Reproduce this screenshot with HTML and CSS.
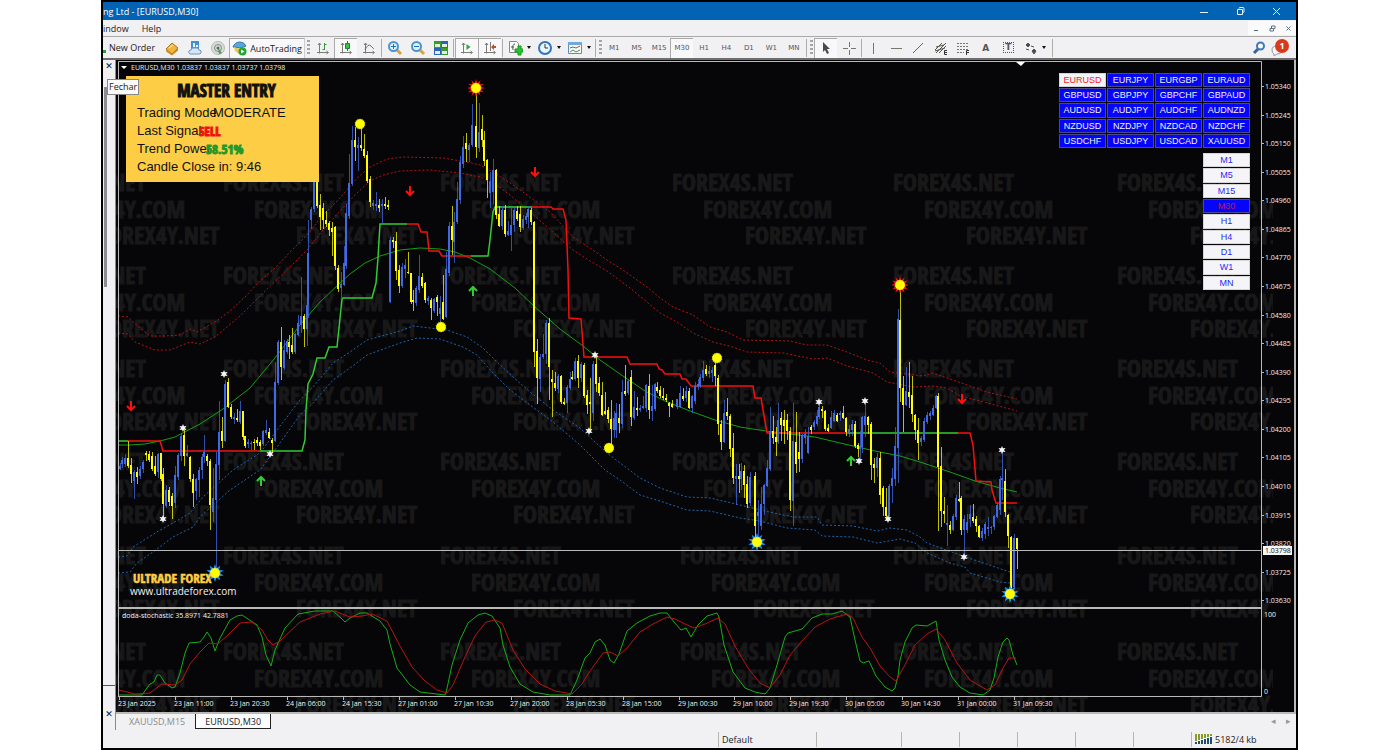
FILE: index.html
```html
<!DOCTYPE html>
<html lang="en">

<head>
    <meta charset="UTF-8" />
    <meta name="viewport" content="width=device-width, initial-scale=1.0" />
    <title>EURUSD,M30</title>
    <link rel="stylesheet" href="styles.css">
</head>

<body>
    <div class="window">
        <header class="title-bar">
            <span class="title">ng Ltd - [EURUSD,M30]</span>
            <button class="win-button" aria-label="Minimize"><svg width="9" height="9"><path d="M0 5.5h8" /></svg></button>
            <button class="win-button" aria-label="Restore"><svg width="9" height="9"><path d="M1.5 2.5h5v5h-5zM3 1.5q0-1 1-1h3q1 0 1 1v3q0 1-1 1" /></svg></button>
            <button class="win-button" aria-label="Close"><svg width="9" height="9"><path d="M1 1l7 7M8 1l-7 7" /></svg></button>
        </header>

        <nav class="menu-bar">
            <a href="#">indow</a>
            <a href="#">Help</a>
            <span class="spacer"></span>
            <button class="mdi-button" aria-label="Minimize chart"><svg width="7" height="7"><path d="M1 5.5h4" /></svg></button>
            <button class="mdi-button" aria-label="Restore chart"><svg width="7" height="7"><path d="M1 3.5h3.5V6H1zM2.500 3V1H6v2.500H5" /></svg></button>
            <button class="mdi-button" aria-label="Close chart"><svg width="7" height="7"><path d="M1.500 1.500l4 4M5.500 1.500l-4 4" /></svg></button>
        </nav>

        <div class="toolbar">
            <button class="new-order"><svg width="3" height="14"><path d="M0 9h3v3H0z" fill="#1fa32a" /></svg>New Order</button>
            <button class="tool" aria-label="Market"><svg width="16" height="16" viewBox="0 0 16 16"><path d="M2 9l6-6 6 5-6 6z" fill="#f0b63c" stroke="#a8741b" /><path d="M2 10l6 3.500 6-5v2l-6 5-6-4z" fill="#c98a24" /><path d="M5 8l4-3" stroke="#fff0b8" /></svg></button>
            <button class="tool" aria-label="VPS"><svg width="16" height="16" viewBox="0 0 16 16"><path d="M4 1h8v8H4z" fill="#3f8fd8" /><path d="M6 3h2v4H6zM9 5h2v2H9z" fill="#e9f5ff" /><path d="M3 14q-2-1-1-3 1-1 2-1 1-3 4-2 3-1 4 2 3 0 2 3-1 1-2 1z" fill="#d7e6f5" stroke="#6b96c4" /></svg></button>
            <button class="tool" aria-label="Signals"><svg width="16" height="16" viewBox="0 0 16 16"><circle cx="8" cy="8" r="6.500" fill="#d8dcd9" stroke="#b4bab6" /><circle cx="8" cy="8" r="3.500" fill="none" stroke="#818a84" /><path d="M8 8l1 6 3-1z" fill="#43a047" /><circle cx="8" cy="8" r="1.500" fill="#51705a" /></svg></button>
            <button class="auto-trading pressed"><svg width="15" height="15" viewBox="0 0 15 15"><path d="M1 6q2-5 7-5 4 0 6 4l-5 2z" fill="#5aa7dc" stroke="#2f79ad" /><path d="M2 6l6 2 5-2-2 6-4 1-4-3z" fill="#f1c74c" /><circle cx="10.500" cy="10.500" r="4" fill="#27a532" /><path d="M9 8.500v4l3.500-2z" fill="#fff" /></svg>AutoTrading</button>
            <span class="grip"></span>
            <button class="tool" aria-label="Bar chart"><svg width="16" height="16" viewBox="0 0 16 16"><path d="M4.500 3v10.500M2 12.500h11M3 5l1.500-2L6 5M11.500 11l2 1.500-2 1.500" class="axis" /><path d="M9.500 3v7M7.500 9.500h2M9.500 4.500h2" stroke="#2f9a3b" fill="none" /></svg></button>
            <button class="tool pressed" aria-label="Candlesticks"><svg width="16" height="16" viewBox="0 0 16 16"><path d="M4.500 3v10.500M2 12.500h11M3 5l1.500-2L6 5M11.500 11l2 1.500-2 1.500" class="axis" /><path d="M9.500 1v10" stroke="#198a26" /><path d="M7.500 3.500h4v5h-4z" fill="#31c441" stroke="#198a26" /></svg></button>
            <button class="tool" aria-label="Line chart"><svg width="16" height="16" viewBox="0 0 16 16"><path d="M4.500 3v10.500M2 12.500h11M3 5l1.500-2L6 5M11.500 11l2 1.500-2 1.500" class="axis" /><path d="M4 10q3-7 6-4t3 3" stroke="#3f8c4b" fill="none" /></svg></button>
            <span class="sep"></span>
            <button class="tool" aria-label="Zoom in"><svg width="16" height="16" viewBox="0 0 16 16"><path d="M10 10l4 4" stroke="#d7a53a" stroke-width="3" /><circle cx="6.500" cy="6.500" r="4.500" fill="#e2f2fd" stroke="#4b93d1" stroke-width="2" /><path d="M4 6.500h5M6.500 4v5" stroke="#1c6eb8" /></svg></button>
            <button class="tool" aria-label="Zoom out"><svg width="16" height="16" viewBox="0 0 16 16"><path d="M10 10l4 4" stroke="#d7a53a" stroke-width="3" /><circle cx="6.500" cy="6.500" r="4.500" fill="#e2f2fd" stroke="#4b93d1" stroke-width="2" /><path d="M4 6.500h5" stroke="#1c6eb8" /></svg></button>
            <button class="tool" aria-label="Tile windows"><svg width="16" height="16" viewBox="0 0 16 16"><path d="M1 1h7v7H1zM8 8h7v7H8z" fill="#3c9a2a" /><path d="M8 1h7v7H8zM1 8h7v7H1z" fill="#2c62b8" /><path d="M2 4h5v3H2zM9 4h5v3H9zM2 11h5v3H2zM9 11h5v3H9z" fill="#dff0e0" /></svg></button>
            <span class="sep"></span>
            <button class="tool pressed" aria-label="Auto scroll"><svg width="16" height="16" viewBox="0 0 16 16"><path d="M4.500 3v10.500M2 12.500h11M3 5l1.500-2L6 5M11.500 11l2 1.500-2 1.500" class="axis" /><path d="M7.500 4v6l4-3z" fill="#2faa3c" /></svg></button>
            <button class="tool pressed" aria-label="Chart shift"><svg width="16" height="16" viewBox="0 0 16 16"><path d="M4.500 3v10.500M2 12.500h11M3 5l1.500-2L6 5M11.500 11l2 1.500-2 1.500M8.500 2v9" class="axis" /><path d="M9 7l3-3v2h2v2h-2v2z" fill="#b5502c" /></svg></button>
            <span class="sep"></span>
            <button class="tool drop" aria-label="Indicators"><svg width="16" height="16" viewBox="0 0 16 16"><path d="M2.500 1.500h7l2 2v9h-9z" fill="#fafafa" stroke="#888" /><path d="M8 4q-3 0-2 6M4 7h3" fill="none" stroke="#555" /><path d="M8 9h3V6h3v3h2v3h-2v3h-3v-3H8z" fill="#27c52f" stroke="#119a1c" /></svg></button>
            <button class="tool drop" aria-label="Periods"><svg width="16" height="16" viewBox="0 0 16 16"><circle cx="8" cy="8" r="6" fill="#eaf5fd" stroke="#2f75bf" stroke-width="2" /><path d="M8 4v4h3" fill="none" stroke="#333" /></svg></button>
            <button class="tool drop" aria-label="Templates"><svg width="16" height="16" viewBox="0 0 16 16"><path d="M1.500 2.500h13v11h-13z" fill="#f7fbff" stroke="#5b8dbd" /><path d="M1 2h14v3H1z" fill="#6fa8dc" /><path d="M3 8l3-1 3 1 4-2" fill="none" stroke="#b5502c" /><path d="M3 12l3-2 3 2 4-2" fill="none" stroke="#3f9a3b" /></svg></button>
            <span class="sep"></span>
            <span class="grip"></span>
            <div class="timeframes">
                <button>M1</button>
                <button>M5</button>
                <button>M15</button>
                <button class="pressed">M30</button>
                <button>H1</button>
                <button>H4</button>
                <button>D1</button>
                <button>W1</button>
                <button>MN</button>
            </div>
            <span class="sep"></span>
            <span class="grip"></span>
            <button class="tool pressed" aria-label="Cursor"><svg width="16" height="16" viewBox="0 0 16 16"><path d="M5 2v10l2-2 2 4 2-1-2-4h3z" fill="#4a4a4a" /></svg></button>
            <button class="tool" aria-label="Crosshair"><svg width="16" height="16" viewBox="0 0 16 16"><path d="M8.500 2v5M8.500 10v5M2 8.500h5M10 8.500h5" stroke="#777768" /></svg></button>
            <span class="sep"></span>
            <div class="drawing">
                <button aria-label="Vertical line"><svg width="16" height="16" viewBox="0 0 16 16"><path d="M8.500 3v11" stroke="#77776a" /></svg></button>
                <button aria-label="Horizontal line"><svg width="16" height="16" viewBox="0 0 16 16"><path d="M3 8.500h11" stroke="#77776a" /></svg></button>
                <button aria-label="Trendline"><svg width="16" height="16" viewBox="0 0 16 16"><path d="M3 13L13 3" stroke="#66665a" /></svg></button>
                <button aria-label="Channel"><svg width="16" height="16" viewBox="0 0 16 16"><path d="M2 10l7-7M3 13L13 3M6 13l7-7M3 7l8-2M2 11l10-3" stroke="#55554b" /><path d="M14 10.500h-2.500v4H14M12 12.500h2" stroke="#333" fill="none" /></svg></button>
                <button aria-label="Fibonacci"><svg width="16" height="16" viewBox="0 0 16 16"><path d="M2 3.500h12M2 6.500h12M2 9.500h12M2 12.500h7" stroke="#77776a" stroke-dasharray="2 1" /><path d="M14 10.500h-2.500V15M12 12.500h2" stroke="#333" fill="none" /></svg></button>
                <button class="letter" aria-label="Text">A</button>
                <button class="letter" aria-label="Text label"><span class="boxed">T</span></button>
                <button aria-label="Arrows"><svg width="16" height="16" viewBox="0 0 16 16"><path d="M5 3l2 2-2 2-2-2zM11 9l2 2-2 3-2-3zM3 9l3 1M8 6l3 1" fill="#4f4f48" stroke="#4f4f48" /></svg></button>
            </div>
            <span class="arrow"></span>
            <span class="sep last"></span>
            <span class="spacer"></span>
            <button class="tool" aria-label="Search"><svg width="16" height="16" viewBox="0 0 16 16"><path d="M7 9l-4 4" stroke="#35659c" stroke-width="3" /><circle cx="9.500" cy="6" r="3.500" fill="#f6fbff" stroke="#3f78b5" stroke-width="2" /></svg></button>
            <button class="tool alerts" aria-label="Notifications"><svg width="18" height="18" viewBox="0 0 18 18"><path d="M2 11q0-4 5-4t5 4-5 4l-3 2 0-2q-2-1-2-4z" fill="#f6f6f6" stroke="#999" /></svg><span class="badge">1</span></button>
        </div>

        <div class="workspace">
            <aside class="panel-edge">
                <button class="close-panel" aria-label="Fechar">&#10005;</button>
                <span class="tip" role="tooltip">Fechar</span>
                <div class="scroll-track"></div>
                <div class="panel-foot">
                    <button class="close-panel" aria-label="Close terminal">&#10005;</button>
                </div>
            </aside>

            <main class="chart-area">
                <div class="chart-wrap">
                    <svg class="chart" id="chart" viewBox="116 60 1180 654"></svg>

                    <section class="info">
                        <h1>MASTER ENTRY</h1>
                        <p><span class="mode">Trading Mode</span>MODERATE</p>
                        <p><span class="signal">Last Signal</span><b class="sell">SELL</b></p>
                        <p><span class="power">Trend Power</span><b class="percent">58.51%</b></p>
                        <p>Candle Close in: 9:46</p>
                    </section>

                    <div class="switcher">
                        <div class="pairs">
                            <button class="active">EURUSD</button><button>EURJPY</button><button>EURGBP</button><button>EURAUD</button>
                            <button>GBPUSD</button><button>GBPJPY</button><button>GBPCHF</button><button>GBPAUD</button>
                            <button>AUDUSD</button><button>AUDJPY</button><button>AUDCHF</button><button>AUDNZD</button>
                            <button>NZDUSD</button><button>NZDJPY</button><button>NZDCAD</button><button>NZDCHF</button>
                            <button>USDCHF</button><button>USDJPY</button><button>USDCAD</button><button>XAUUSD</button>
                        </div>
                        <div class="periods">
                            <button>M1</button>
                            <button>M5</button>
                            <button>M15</button>
                            <button class="active">M30</button>
                            <button>H1</button>
                            <button>H4</button>
                            <button>D1</button>
                            <button>W1</button>
                            <button>MN</button>
                        </div>
                    </div>
                </div>

                <nav class="tabs">
                    <a href="#">XAUUSD,M15</a>
                    <a href="#" class="current">EURUSD,M30</a>
                    <span class="spacer"></span>
                    <button aria-label="Previous tab">&#9666;</button>
                    <button aria-label="Next tab">&#9656;</button>
                </nav>
            </main>
        </div>

        <footer class="status-bar">
            <span class="hint"></span>
            <span class="profile">Default</span>
            <span class="wide"></span>
            <span></span>
            <span></span>
            <span></span>
            <span></span>
            <span></span>
            <span class="traffic"><svg width="18" height="12"><path d="M0 1h2v7H0zM3 1h2v6H3zM6 1h2v5H6zM9 1h2v4H9zM12 1h2v3h-2zM15 1h2v2h-2z" fill="#8a9a2c" /><path d="M0 9h2v2H0zM3 8h2v3H3zM6 7h2v4H6zM9 6h2v5H9zM12 5h2v6h-2zM15 4h2v7h-2z" fill="#1f4f6e" /></svg>5182/4 kb</span>
        </footer>
    </div>

    <script src="chart.js"></script>
</body>

</html>
```

FILE: styles.css
```css
* {
    box-sizing: border-box;
}

body {
    margin: 0;
    padding: 0 102px 0 101px;
    background-color: #fff;
    font-family: "Open Sans", "Noto Sans", sans-serif;
    font-size: 9px;
    color: #222;
}

button {
    border: 0;
    padding: 0;
    background: none;
    font-family: inherit;
    font-size: inherit;
    color: inherit;
    cursor: pointer;
}

a {
    color: inherit;
    text-decoration: none;
}

.window {
    min-height: 100vh;
    display: flex;
    flex-direction: column;
    border: 2px solid #000;
    background-color: #f1f0f3;
    overflow: hidden;
}

.spacer {
    flex: 1;
}

/* title and menu */
.title-bar {
    height: 18px;
    display: flex;
    align-items: center;
    padding-right: 2px;
    background-color: #0263b5;
    color: #fff;
}

.title {
    flex: 1;
}

.win-button {
    width: 36px;
    height: 18px;
    display: flex;
    align-items: center;
    justify-content: center;
}

.win-button path {
    fill: none;
    stroke: #e8f2fb;
}

.menu-bar {
    height: 17px;
    display: flex;
    align-items: center;
    gap: 13px;
    border-bottom: 1px solid #a9a9a9;
}

.mdi-button {
    width: 16px;
    height: 14px;
    margin-left: -13px;
    background-color: #fafafa;
}

.mdi-button:first-of-type {
    margin-left: 0;
}

.mdi-button path {
    fill: none;
    stroke: #5b6f80;
}

/* toolbar */
.toolbar {
    height: 23px;
    display: flex;
    align-items: center;
    border-bottom: 2px solid #6e6e6e;
}

.new-order {
    width: 57px;
    display: flex;
    align-items: center;
    gap: 3px;
    white-space: nowrap;
}

.tool {
    width: 23px;
    height: 20px;
    flex: none;
    display: flex;
    align-items: center;
    justify-content: center;
}

.tool .axis {
    fill: none;
    stroke: #7c7c76;
}

.pressed {
    background-color: #f8f7fa;
    border-top: 1px solid #aaa;
    border-left: 1px solid #aaa;
}

.auto-trading {
    width: 76px;
    height: 20px;
    display: flex;
    align-items: center;
    justify-content: center;
    gap: 3px;
    border-right: 1px solid #ccc;
}

.drop {
    width: 30px;
    gap: 4px;
}

.drop::after,
.arrow {
    content: "";
    border: 2px solid transparent;
    border-top: 3px solid #111;
    border-bottom: 0;
}

.grip {
    width: 3px;
    height: 16px;
    margin: 0 1px 0 2px;
    background-image: repeating-linear-gradient(#a5a5a5 0 2px, transparent 2px 4px);
}

.sep {
    width: 1px;
    height: 18px;
    margin: 0 1px;
    background-color: #aeaea8;
}

.last {
    margin-left: 6px;
}

.timeframes,
.drawing {
    display: grid;
    grid-auto-flow: column;
    grid-auto-columns: 1fr;
    width: 202px;
    height: 20px;
    font-family: "DejaVu Sans", sans-serif;
    font-size: 7px;
    color: #555;
}

.drawing {
    width: 180px;
    margin-left: -1px;
}

.drawing button {
    display: flex;
    align-items: center;
    justify-content: center;
}

.drawing .letter {
    font-size: 9px;
    font-weight: bold;
}

.boxed {
    width: 11px;
    height: 11px;
    border: 1px dotted #555;
    line-height: 9px;
}

.alerts {
    position: relative;
    width: 26px;
    justify-content: flex-start;
}

.badge {
    position: absolute;
    left: 5px;
    top: 1px;
    width: 14px;
    height: 14px;
    border-radius: 50%;
    background-color: #d93a1a;
    color: #fff;
    font-weight: bold;
    line-height: 14px;
    text-align: center;
}

/* left edge of the navigator panel */
.workspace {
    flex: 1;
    display: flex;
}

.panel-edge {
    position: relative;
    width: 13px;
    display: flex;
    flex-direction: column;
    align-items: center;
    gap: 15px;
    border-right: 1px solid #8a8a8a;
}

.close-panel {
    height: 12px;
    font-family: "DejaVu Sans", sans-serif;
    font-size: 9px;
    font-weight: bold;
    line-height: 12px;
    color: #111;
}

.scroll-track {
    width: 3px;
    height: 200px;
    margin-right: 7px;
    background-color: #8d8c90;
}

.panel-foot {
    width: 100%;
    height: 45px;
    margin-top: auto;
    padding-top: 21px;
    border-top: 1px solid #555;
    text-align: center;
}

.tip {
    position: absolute;
    left: 4px;
    top: 19px;
    z-index: 2;
    border: 1px solid #888;
    background-color: #fbfaf6;
    padding: 0 1px;
    line-height: 14px;
}

/* chart */
.chart-area {
    flex: 1;
    min-width: 0;
    display: flex;
    flex-direction: column;
}

.chart-wrap {
    position: relative;
}

.chart {
    display: block;
    width: 100%;
    height: auto;
    background-color: #060508;
    font-family: "Open Sans", "Noto Sans", sans-serif;
}

.chart polyline {
    fill: none;
}

.frame {
    fill: none;
    stroke: #b9bab7;
}

.divider {
    stroke: #b9bab7;
    stroke-width: 2;
}

.watermark {
    font-family: "Open Sans Condensed", "Open Sans", sans-serif;
    font-weight: bold;
    font-size: 24px;
    fill: #181819;
    stroke: #181819;
}

.ma {
    stroke: #12a012;
}

.trend-up {
    stroke: #32cd32;
    stroke-width: 1.5;
}

.trend-down {
    stroke: #f51010;
    stroke-width: 1.5;
}

.band-red,
.band-blue {
    stroke: #b01414;
    stroke-dasharray: 2 2;
}

.band-blue {
    stroke: #1c64ac;
}

.stoch-green {
    stroke: #14b014;
}

.stoch-red {
    stroke: #b81414;
}

.axis-text {
    font-size: 7px;
    fill: #f0f0f0;
}

.brand {
    font-family: "Open Sans Condensed", "Open Sans", sans-serif;
    font-size: 13px;
    font-weight: bold;
    fill: #ffcf46;
    stroke: #ffcf46;
    stroke-width: 0.5;
}

.site {
    font-size: 10px;
    fill: #f2f2f2;
}

.info {
    position: absolute;
    left: 10px;
    top: 16px;
    width: 193px;
    height: 106px;
    padding: 5px 11px;
    background-color: #fdcd46;
    color: #111;
    font-family: "Liberation Sans", sans-serif;
    font-size: 13px;
    line-height: 18px;
}

.info h1 {
    margin: 0 0 4px 8px;
    text-align: center;
    font-size: 17px;
    line-height: 19px;
    -webkit-text-stroke: 1px #111;
}

.info h1,
.info b {
    font-family: "Open Sans Condensed", "Open Sans", sans-serif;
}

.info p {
    margin: 0;
    display: flex;
    white-space: nowrap;
}

.info span {
    flex: none;
}

.mode {
    width: 76px;
}

.signal {
    width: 62px;
}

.power {
    width: 69px;
}

.sell {
    color: #f01010;
    -webkit-text-stroke: 1px #f01010;
}

.percent {
    color: #1f9a2a;
    -webkit-text-stroke: 1px #1f9a2a;
}

.switcher {
    position: absolute;
    right: 46px;
    top: 13px;
    display: flex;
    flex-direction: column;
    align-items: flex-end;
    gap: 5px;
    font-family: "Liberation Sans", sans-serif;
    font-size: 9px;
}

.pairs,
.periods {
    display: grid;
    grid-template-columns: repeat(4, 47px);
    grid-auto-rows: 1fr;
    gap: 1px;
    height: 75px;
}

.periods {
    grid-template-columns: 47px;
    height: 137px;
}

.pairs button,
.periods .active {
    border: 1px solid #4a4a8a;
    background-color: #0505fa;
    color: #f2f2f2;
    line-height: 12px;
}

.pairs .active,
.periods button {
    background-color: #f5f4f8;
    color: #2a2af0;
    border: 1px solid #d5d5d5;
    line-height: 12px;
}

.pairs .active {
    color: #f52020;
}

.periods .active {
    background-color: #0505fa;
    color: #c01850;
}

/* chart tabs and status bar */
.tabs {
    flex: 1;
    height: 16px;
    display: flex;
    align-items: flex-start;
    color: #444;
}

.tabs a {
    height: 15px;
    padding: 0 10px 0 13px;
    line-height: 15px;
    color: #8b8b8b;
}

.tabs .current {
    padding: 0 9px;
    background-color: #fdfcfe;
    border: 1px solid #222;
    border-top: 0;
    color: #222;
}

.tabs button {
    width: 15px;
    color: #999;
    line-height: 14px;
}

.status-bar {
    height: 18px;
    display: flex;
    align-items: center;
}

.status-bar span {
    width: 58px;
    height: 15px;
    padding-left: 3px;
    line-height: 15px;
    border-left: 1px solid #b5b5b0;
}

.status-bar .hint {
    flex: 1;
    border: 0;
}

.status-bar .profile {
    width: 98px;
}

.status-bar .wide {
    width: 85px;
}

.status-bar .traffic {
    width: 105px;
    display: flex;
    align-items: center;
    gap: 2px;
}
```

FILE: chart.js
```js
const svgNS = "http://www.w3.org/2000/svg";
const chart = document.querySelector("#chart");
const barStep = 2.93;

// Each bar: direction, high, body top, body bottom, low
const segments = [
    [119.5, "u463 466 469 470,u457 460 464 468,u454 458 464 467,d441 458 466 468,d458 465 474 483,u470 472 481 499,d467 472 477 484,u466 469 476 479,u460 462 469 473,d451 453 455 461,d451 454 460 462,d452 456 469 471,d456 466 474 476,u453 454 472 478,d453 453 479 481,d468 474 504 518,u485 490 506 508,d487 490 502 506,d493 496 506 519,u466 475 503 508,u453 455 477 480,u433 436 456 461,d430 435 456 466,u445 453 456 457,d456 457 479 482,d474 479 493 507,u478 479 491 500,u467 470 480 497,u454 457 470 479,u435 452 457 463,d454 456 461 466,d459 461 505 530,u468 498 512 522,u452 464 500 572,u401 432 465 480,d417 431 441 448,u380 384 441 442,d378 382 407 408,d404 407 417 419,u413 417 419 424,d409 418 420 422,u401 411 422 424,d411 411 437 440,d436 436 446 448,u439 442 444 448,u441 443 444 450,d439 442 443 450,d437 440 443 446,d440 442 446 450,u430 431 444 446,u420 430 433 435,d428 432 438 439,d438 440 443 452,u362 382 441 442,u340 342 383 385,d327 342 367 380,u340 350 368 370,u339 341 352 354,d335 342 347 359,d328 345 352 354,u333 334 352 354,u315 323 335 336,u277 316 325 333,d314 316 329 347,u294 305 329 346"],
    [308.4, "u220 253 305 318,u207 209 220 229,u144 168 209 212,d160 180 206 208,d194 205 217 230,d203 208 220 229,d211 220 224 227,d221 223 230 236,d222 228 232 256,d226 227 266 270,d265 268 289 292,u272 284 288 298,u246 263 285 286,u204 213 266 269,u154 183 216 219,u126 140 184 186,d127 140 147 161,u137 145 148 171,d121 145 148 151,d134 149 156 158,d151 155 181 183,d176 179 202 207,u200 203 206 210,u192 204 206 211,d199 205 208 212,u199 204 206 224,d197 204 206 209,d200 205 207 210"],
    [390, "u237 240 302 303,d237 240 242 248,d232 241 271 280,d265 270 286 293,u263 267 286 288,u259 265 269 278,d252 272 273 274,d273 273 302 304,d290 300 302 311,u286 288 303 306,u255 276 290 293,d273 277 286 288,d282 283 300 303,u296 298 301 305,d298 300 308 320,u298 299 311 313,d295 297 302 316,u296 308 314 326,d275 302 319 320,u252 269 317 318,u222 226 273 276,d206 226 240 255,u212 222 242 263,u182 199 222 224,u156 162 200 204,u136 147 164 168,d133 143 149 162,u143 145 150 162,u104 125 145 147"],
    [475.7, "d92 126 147 158,u103 132 148 152,d115 129 140 147,d131 140 161 166,d159 160 180 198,u172 181 193 208,u159 170 192 204,d169 170 215 219,d206 214 226 227,u206 210 226 230,d205 210 234 237,u221 231 235 236,u207 225 235 251,u208 210 225 232,d206 211 219 221,d206 214 227 232,u215 219 228 230,u213 216 220 224,u206 209 217 228,d208 210 222 225"],
    [534.4, "d221 222 352 367,d339 351 378 404,u354 357 379 392,u334 354 357 359,u320 323 354 364,d318 323 367 400,d370 379 382 417,d372 383 388 391,u374 376 389 393,d375 376 402 404,d398 402 404 405,u385 387 403 413,u372 379 388 390,d371 377 379 380,u358 361 379 381,d355 361 378 388,u362 364 378 382,d363 365 396 398,d390 395 405 414,d378 402 404 430,u361 364 413 421,d357 364 384 392,d377 383 393 396,d382 395 415 416,d392 411 414 415,d407 410 419 423,d400 419 429 447,u411 418 430 438,u403 413 430 438,d404 418 423 433,u380 392 424 428,d365 391 394 396,u379 381 393 395,d370 377 417 426,u391 407 418 420,d397 408 410 416,u405 408 410 412,u396 406 408 409,u384 385 408 412,d374 386 410 419,u385 406 411 421,u383 384 409 411,d382 387 391 393,d386 390 396 398,d388 396 398 400,d394 398 400 402,d402 403 406 417,d400 404 407 408"],
    [677, "u399 399 407 409,u386 393 407 408,d388 396 399 401,u386 391 398 402,d388 391 408 409,u395 396 408 413,u382 386 401 404,u379 384 387 390,u374 377 386 388,u361 370 378 381,d365 369 374 376,u366 371 374 378,u367 370 373 382,d361 365 376 386,d375 378 424 435,d420 424 442 450,u400 413 442 443,d398 412 416 420,d414 416 449 457,d433 448 478 484,u464 476 479 505,d464 476 479 493,u463 471 479 490,d465 471 485 498,d476 484 504 508,u472 477 503 506"],
    [755, "d472 476 526 540,u500 512 516 538,u487 504 526 530,u484 485 504 515,u460 468 486 487,u407 431 469 471,d416 431 438 444,d427 437 442 456,u403 420 442 444,d412 418 425 441,d410 420 426 444,d414 420 431 440,d427 431 500 511,u403 441 501 526,d412 442 464 473,d432 452 459 472,u434 435 459 463,u429 434 438 444,u427 436 453 454,d425 427 430 434,u420 422 427 430,u410 416 424 426,u405 407 417 419,d406 409 411 418,d410 411 429 431,d424 428 431 432,u411 417 428 429,u410 413 421 422,d413 415 421 422,u411 413 415 421,d406 413 418 419,d417 418 432 436,u425 429 433 437,u420 424 430 436,d421 424 446 448,d443 445 449 457,u431 446 449 460"],
    [862.4, "u416 417 447 453,u404 416 425 437,d416 417 425 434,d422 424 465 480,d458 464 468 483,u453 457 468 477,d452 458 495 504,d486 488 507 516,d488 507 516 518,u484 486 516 518,u468 478 486 503,u427 446 479 486,u309 319 448 483,d288 320 388 402,d376 388 405 432,u367 391 405 406,d362 392 397 408,d376 395 414 422,d414 415 430 440,d418 430 443 460,u436 438 442 446,u418 421 440 442,u412 415 422 424,u411 413 416 420,u405 408 415 416,u395 396 408 409"],
    [938, "d393 396 467 531,d447 466 511 527,d497 511 514 523,u505 523 525 546,d521 525 530 534,u514 516 530 531,u495 498 517 520,d482 499 501 502,d496 498 530 535,u515 519 530 554,u514 522 530 533,u505 514 519 527,d504 517 521 523,d516 519 526 532,d525 526 537 538,u528 531 538 541,u522 524 534 539,u517 527 529 536,u526 527 528 534,u515 516 527 530,u503 505 517 518,u476 479 510 515,u452 478 480 500,d469 481 512 517,d514 515 536 548,d536 537 588 592,u534 538 587 588,d538 538 549 569"]
];

const lines = [
    ["band-red", "118,316 128,317 140,328 150,336 165,336 180,335 190,329 197,332 215,322 230,311 245,297 260,281 275,268 290,252 307,235 323,215 340,198 357,178 370,167 387,159 403,157 443,158 467,162 480,165 493,172 510,183 523,192 550,212 573,237 590,248 607,260 623,270 647,287 660,298 673,307 693,315 710,327 727,332 743,340 790,341 807,345 827,345 847,352 867,360 880,363 890,372 923,376 933,373 953,380 967,385 987,392 1017,399"],
    ["band-red", "118,333 128,334 135,342 155,350 170,350 190,342 200,344 215,337 240,316 260,296 290,267 307,250 323,230 340,211 357,193 370,181 383,175 400,171 430,170 460,173 480,177 495,184 510,195 523,206 545,225 573,250 590,261 607,271 630,288 660,313 677,322 693,333 713,342 733,347 747,352 783,353 813,359 827,358 847,366 873,373 887,382 913,387 933,386 947,388 960,396 980,401 1017,411"],
    ["band-blue", "118,557 127,556 133,547 157,532 173,523 190,513 203,497 233,470 260,453 277,430 300,400 313,387 333,363 350,352 367,340 400,331 413,326 447,330 467,337 483,348 497,362 513,377 530,392 553,410 580,428 607,453 640,478 660,488 687,497 710,498 740,505 760,510 793,517 817,517 822,525 853,526 877,531 890,528 907,530 920,537 927,543 960,555 1010,572"],
    ["band-blue", "118,573 130,572 137,563 153,552 173,537 193,527 200,517 230,490 260,470 277,447 300,415 313,403 333,380 350,368 367,355 400,343 417,338 440,339 463,347 477,355 493,373 510,390 530,405 553,422 580,445 605,470 620,480 640,495 660,501 687,510 710,511 740,518 760,521 787,528 815,530 822,536 853,537 877,543 900,539 915,543 927,553 950,563 965,567 970,573 1000,582 1010,583"],
    ["ma", "118,445 130,445 145,444 160,441 175,437 200,424 223,409 250,388 275,358 300,325 320,302 340,283 350,274 365,263 380,256 400,250 420,248 440,249 455,252 470,258 490,269 515,288 535,307 560,329 583,346 600,360 620,374 645,391 665,401 690,411 715,420 740,427 766,431 790,434 815,437 840,443 875,451 900,456 920,462 950,472 975,481 1000,488 1017,492"],
    ["trend-up", "118,441 128,441"],
    ["trend-down", "128,441 160,441 163,451 260,451"],
    ["trend-up", "260,451 302,451 305,440 306,410 308,384 313,374 317,358 325,358 329,347 337,347 342,299 343,298 372,298 376,283 378,258 380,224 407,224"],
    ["trend-down", "407,224 418,224 421,232 427,232 429,251 439,251 442,256 471,256"],
    ["trend-up", "471,256 488,256 490,240 493,212 495,207 532,207"],
    ["trend-down", "532,207 551,207 553,209 563,209 566,220 568,270 569,318 581,319 584,357 627,357 630,364 657,364 659,369 662,370 665,374 680,374 682,379 686,379 691,386 753,386 755,398 761,398 767,433 848,433"],
    ["trend-up", "848,433 958,433"],
    ["trend-down", "958,433 970,433 973,445 976,481 991,482 992,490 996,503 1017,503"],
    ["stoch-green", "119,695 142,695 147,688 150,684 154,682 157,675 160,675 165,683 172,688 175,687 180,673 185,653 189,643 200,642 204,637 207,632 211,638 215,651 220,638 230,620 237,616 242,615 248,619 257,625 262,637 266,655 271,666 275,650 285,628 298,614 315,611 333,611 341,618 345,622 350,618 360,613 367,613 380,621 387,630 390,644 397,668 410,685 420,692 445,695 446,693 452,665 460,640 468,623 478,615 485,613 492,616 500,628 503,645 510,667 520,684 533,692 550,695 570,695 577,680 585,658 590,653 595,642 600,639 605,645 610,660 614,663 619,654 627,631 637,623 650,616 660,613 667,613 674,622 681,630 686,628 691,637 698,625 707,616 717,613 719,617 724,645 733,672 745,688 755,692 765,694 770,688 777,665 785,637 788,633 802,629 812,618 822,614 832,614 842,611 850,617 855,640 860,661 863,663 869,661 876,676 885,687 892,691 895,688 898,676 900,660 905,642 912,628 916,625 927,626 936,621 939,640 945,660 952,677 960,687 970,693 983,695 990,690 994,678 998,657 1003,642 1007,638 1009,640 1013,655 1017,665"],
    ["stoch-red", "119,690 135,694 150,693 162,684 175,685 182,680 190,664 200,652 209,643 218,644 230,633 240,623 252,622 262,630 268,640 273,645 280,641 300,622 320,614 335,611 342,614 350,617 362,616 372,614 387,621 400,646 412,667 425,681 437,690 447,693 453,685 465,657 475,636 486,622 495,620 502,623 513,650 525,669 540,684 555,691 572,694 582,684 590,671 603,653 610,652 618,656 627,648 640,632 653,624 667,617 675,619 685,624 694,628 705,624 718,618 725,624 735,646 748,668 760,683 770,688 780,675 790,655 802,641 815,627 830,619 847,614 853,618 862,637 870,648 880,666 890,677 896,681 905,665 915,645 927,634 936,629 945,640 957,663 970,680 987,690 995,685 1003,668 1009,658 1016,658"]
];

const timeLabels = ["23 Jan 2025", "23 Jan 11:00", "23 Jan 20:30", "24 Jan 06:00", "24 Jan 15:30", "27 Jan 01:00", "27 Jan 10:30", "27 Jan 20:00", "28 Jan 05:30", "28 Jan 15:00", "29 Jan 00:30", "29 Jan 10:00", "29 Jan 19:30", "30 Jan 05:00", "30 Jan 14:30", "31 Jan 00:00", "31 Jan 09:30"];

function add(tag, attrs, text) {
    const el = document.createElementNS(svgNS, tag);
    for (const name in attrs) {
        el.setAttribute(name, attrs[name]);
    }
    if (text) {
        el.textContent = text;
    }
    chart.appendChild(el);
}

function label(x, y, text, cls) {
    add("text", { x: x, y: y, class: cls }, text);
}

// Star shape with n spikes
function spikes(x, y, n, outer, inner, color) {
    const points = [];
    for (let i = 0; i < n * 2; i++) {
        const r = i % 2 ? inner : outer;
        const a = Math.PI * i / n - Math.PI / 2;
        points.push((x + r * Math.cos(a)).toFixed(1) + "," + (y + r * Math.sin(a)).toFixed(1));
    }
    add("polygon", { points: points.join(" "), fill: color });
}

function arrow(x, y, dir, color) {
    add("path", {
        d: `M${x} ${y - 5 * dir}v${8 * dir}M${x - 4} ${y}l4 ${4 * dir}l4 ${-4 * dir}`,
        stroke: color, "stroke-width": 2, fill: "none"
    });
}

function drawWatermarks() {
    const rows = [191, 284, 377, 470, 564, 660];
    const cols = [25, 223, 440, 672, 893, 1117];
    rows.forEach((y, row) => {
        cols.forEach((x) => {
            // the two bottom rows drift to the right in the middle columns
            const left = row > 3 && x > 600 && x < 700 ? x + 8 : x;
            label(left, y, "FOREX4S.NET", "watermark");
            label(left + 31, y + 27, "FOREX4Y.COM", "watermark");
            label(left + 73, y + 53, "FOREX4Y.NET", "watermark");
        });
    });
    add("rect", { x: 1273, y: 60, width: 23, height: 652, fill: "#060508" });
}

function drawCandles() {
    segments.forEach(([start, data]) => {
        data.split(",").forEach((bar, i) => {
            const color = bar[0] === "u" ? "#4169e1" : "#ffff00";
            const [high, top, bottom, low] = bar.slice(1).split(" ").map(Number);
            const x = Math.round(start + i * barStep);
            add("rect", { x: x, y: high, width: 1, height: low - high, fill: color, opacity: 0.75 });
            add("rect", { x: x - 1, y: top, width: 2, height: Math.max(bottom - top, 1), fill: color });
        });
    });
}

function drawAxes() {
    add("path", { d: "M118.5 696V61.5H1261.5V696.5H118", class: "frame" });
    add("path", { d: "M118 608H1261", class: "divider" });
    add("path", { d: "M116 713H1296M1295 60V713", class: "divider" });
    add("path", { d: "M118 550.5H1261", class: "frame" });
    for (let i = 0; i < 19; i++) {
        const y = Math.round(86 + i * 28.57);
        add("path", { d: `M1261 ${y}.5h3`, class: "frame" });
        label(1265, y + 3, (1.0534 - i * 0.00095).toFixed(5), "axis-text");
    }
    add("rect", { x: 1263, y: 546, width: 29, height: 9, fill: "#f5f5f5" });
    add("text", { x: 1265, y: 553, class: "axis-text", style: "fill: #111" }, "1.03798");
    label(1264, 617, "100", "axis-text");
    label(1264, 694, "0", "axis-text");
    timeLabels.forEach((text, i) => {
        const x = Math.round(118 + i * 55.95);
        add("path", { d: `M${x + 1}.5 697v3`, class: "frame" });
        label(x, 706, text, "axis-text");
    });
    label(131, 70, "EURUSD,M30  1.03837 1.03837 1.03737 1.03798", "axis-text");
    label(122, 618, "doda-stochastic 35.8971 42.7881", "axis-text");
    add("path", { d: "M121 66h6l-3 3zM1016 62h9l-4 4z", fill: "#fff" });
}

function drawMarkers() {
    [[476, 88], [900, 285]].forEach(([x, y]) => spikes(x, y, 12, 9, 5, "#f01010"));
    [[215, 573], [757, 542], [1010, 594]].forEach(([x, y]) => spikes(x, y, 10, 9, 5, "#1e90ff"));
    [[476, 88], [900, 285], [215, 573], [757, 542], [1010, 594], [360, 124], [441, 327], [609, 448], [717, 358]]
        .forEach(([x, y]) => spikes(x, y, 14, 5.5, 4.5, "#ffff00"));
    [[183, 428], [224, 374], [163, 519], [270, 454], [595, 355], [589, 431], [819, 402], [865, 401], [859, 461], [888, 519], [964, 557], [1002, 450]]
        .forEach(([x, y]) => spikes(x, y, 6, 4, 2, "#f4f4f4"));
    [[131, 406], [410, 191], [535, 172], [962, 399]].forEach(([x, y]) => arrow(x, y, 1, "#ff1010"));
    [[261, 481], [473, 291], [851, 461]].forEach(([x, y]) => arrow(x, y, -1, "#32cd32"));
}

drawWatermarks();
lines.forEach(([cls, points]) => add("polyline", { points: points, class: cls }));
drawCandles();
drawAxes();
drawMarkers();
label(133, 583, "ULTRADE FOREX", "brand");
label(130, 595, "www.ultradeforex.com", "site");
```
